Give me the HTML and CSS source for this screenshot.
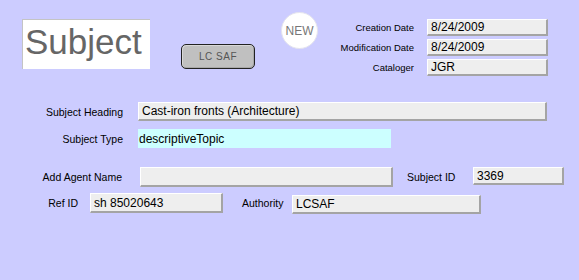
FILE: index.html
```html
<!DOCTYPE html>
<html>
<head>
<meta charset="utf-8">
<link rel="stylesheet" href="styles.css">
</head>
<body>
<div class="page">
  <div class="header">
    <div class="title">Subject</div>
    <div class="btn">LC SAF</div>
    <div class="new">NEW</div>
    <div class="meta">
      <div class="mlabel">Creation Date</div><div class="field">8/24/2009</div>
      <div class="mlabel">Modification Date</div><div class="field">8/24/2009</div>
      <div class="mlabel">Cataloger</div><div class="field">JGR</div>
    </div>
  </div>
  <div class="row r1">
    <div class="label w123">Subject Heading</div>
    <div class="field f-heading">Cast-iron fronts (Architecture)</div>
  </div>
  <div class="row r2">
    <div class="label w123">Subject Type</div>
    <div class="field cyan f-type">descriptiveTopic</div>
  </div>
  <div class="row r3">
    <div class="label w122">Add Agent Name</div>
    <div class="field f-agent"></div>
    <div class="label sid">Subject ID</div>
    <div class="field f-sid">3369</div>
  </div>
  <div class="row r4">
    <div class="label w78">Ref ID</div>
    <div class="field f-ref">sh 85020643</div>
    <div class="label auth">Authority</div>
    <div class="field f-auth">LCSAF</div>
  </div>
</div>
</body>
</html>
```
FILE: styles.css
```css
html, body {
  margin: 0;
  padding: 0;
  background: #ccccff;
  font-family: "Liberation Sans", Arial, sans-serif;
  color: #000;
}
.page {
  width: 579px;
  height: 280px;
  background: #ccccff;
}
.header {
  display: flex;
  align-items: flex-start;
  height: 80px;
}
.title {
  box-sizing: border-box;
  margin-left: 22px;
  margin-top: 19px;
  width: 128px;
  height: 50px;
  background: #fff;
  border-top: 1px solid #c4c4c4;
  border-left: 1px solid #c4c4c4;
  color: #666;
  font-size: 35px;
  line-height: 43px;
  padding-left: 2px;
}
.btn {
  box-sizing: border-box;
  margin-left: 31px;
  margin-top: 44px;
  width: 74px;
  height: 25px;
  border: 1px solid #222;
  border-radius: 5px;
  background: #c0c0c0;
  box-shadow: inset 1px 1px 0 #d8d8d8, inset -1px -1px 0 #a8a8a8;
  color: #555;
  font-size: 10px;
  letter-spacing: 0.5px;
  display: flex;
  align-items: center;
  justify-content: center;
}
.new {
  box-sizing: border-box;
  margin-left: 26px;
  margin-top: 12px;
  width: 37px;
  height: 37px;
  border-radius: 50%;
  background: #fff;
  border: 1px solid #e4e4ee;
  color: #777;
  font-size: 12px;
  display: flex;
  align-items: center;
  justify-content: center;
}
.meta {
  margin-left: 10px;
  margin-top: 19px;
  display: grid;
  grid-template-columns: 86px 121px;
  grid-auto-rows: 17px;
  column-gap: 13px;
  row-gap: 3px;
}
.mlabel {
  font-size: 9.5px;
  text-align: right;
  display: flex;
  align-items: center;
  justify-content: flex-end;
  white-space: nowrap;
}
.field {
  box-sizing: border-box;
  background: #eeeeee;
  border-top: 1px solid #fff;
  border-left: 1px solid #fff;
  border-bottom: 2px solid #a4a4a4;
  border-right: 2px solid #a4a4a4;
  font-size: 12px;
  padding-left: 3px;
  display: flex;
  align-items: center;
  white-space: nowrap;
  overflow: hidden;
}
.row {
  display: flex;
  align-items: center;
}
.label {
  font-size: 10.5px;
  white-space: nowrap;
  text-align: right;
  flex: none;
}
.r1 { margin-top: 22px; height: 19px; }
.r2 { margin-top: 8px; height: 19px; }
.r3 { margin-top: 19px; height: 20px; align-items: flex-start; }
.r4 { margin-top: 6px; height: 21px; align-items: flex-start; }
.r3 .label, .r4 .label { line-height: 20px; }
.w123 { width: 123px; }
.w122 { width: 122px; }
.w78 { width: 78px; }
.f-heading { margin-left: 15px; width: 409px; height: 19px; }
.f-type {
  margin-left: 15px;
  width: 253px;
  height: 19px;
  border: none;
  padding-left: 1px;
}
.cyan { background: #ccffff; }
.f-agent { margin-left: 18px; width: 253px; height: 20px; }
.sid { margin-left: 14px; width: 45px; text-align: left; line-height: 18px; }
.f-sid { margin-left: 21px; width: 91px; height: 18px; }
.f-ref { margin-left: 12px; width: 133px; height: 20px; }
.auth { margin-left: 19px; width: 41px; text-align: left; }
.f-auth { margin-left: 9px; width: 189px; height: 19px; margin-top: 2px; }
```
